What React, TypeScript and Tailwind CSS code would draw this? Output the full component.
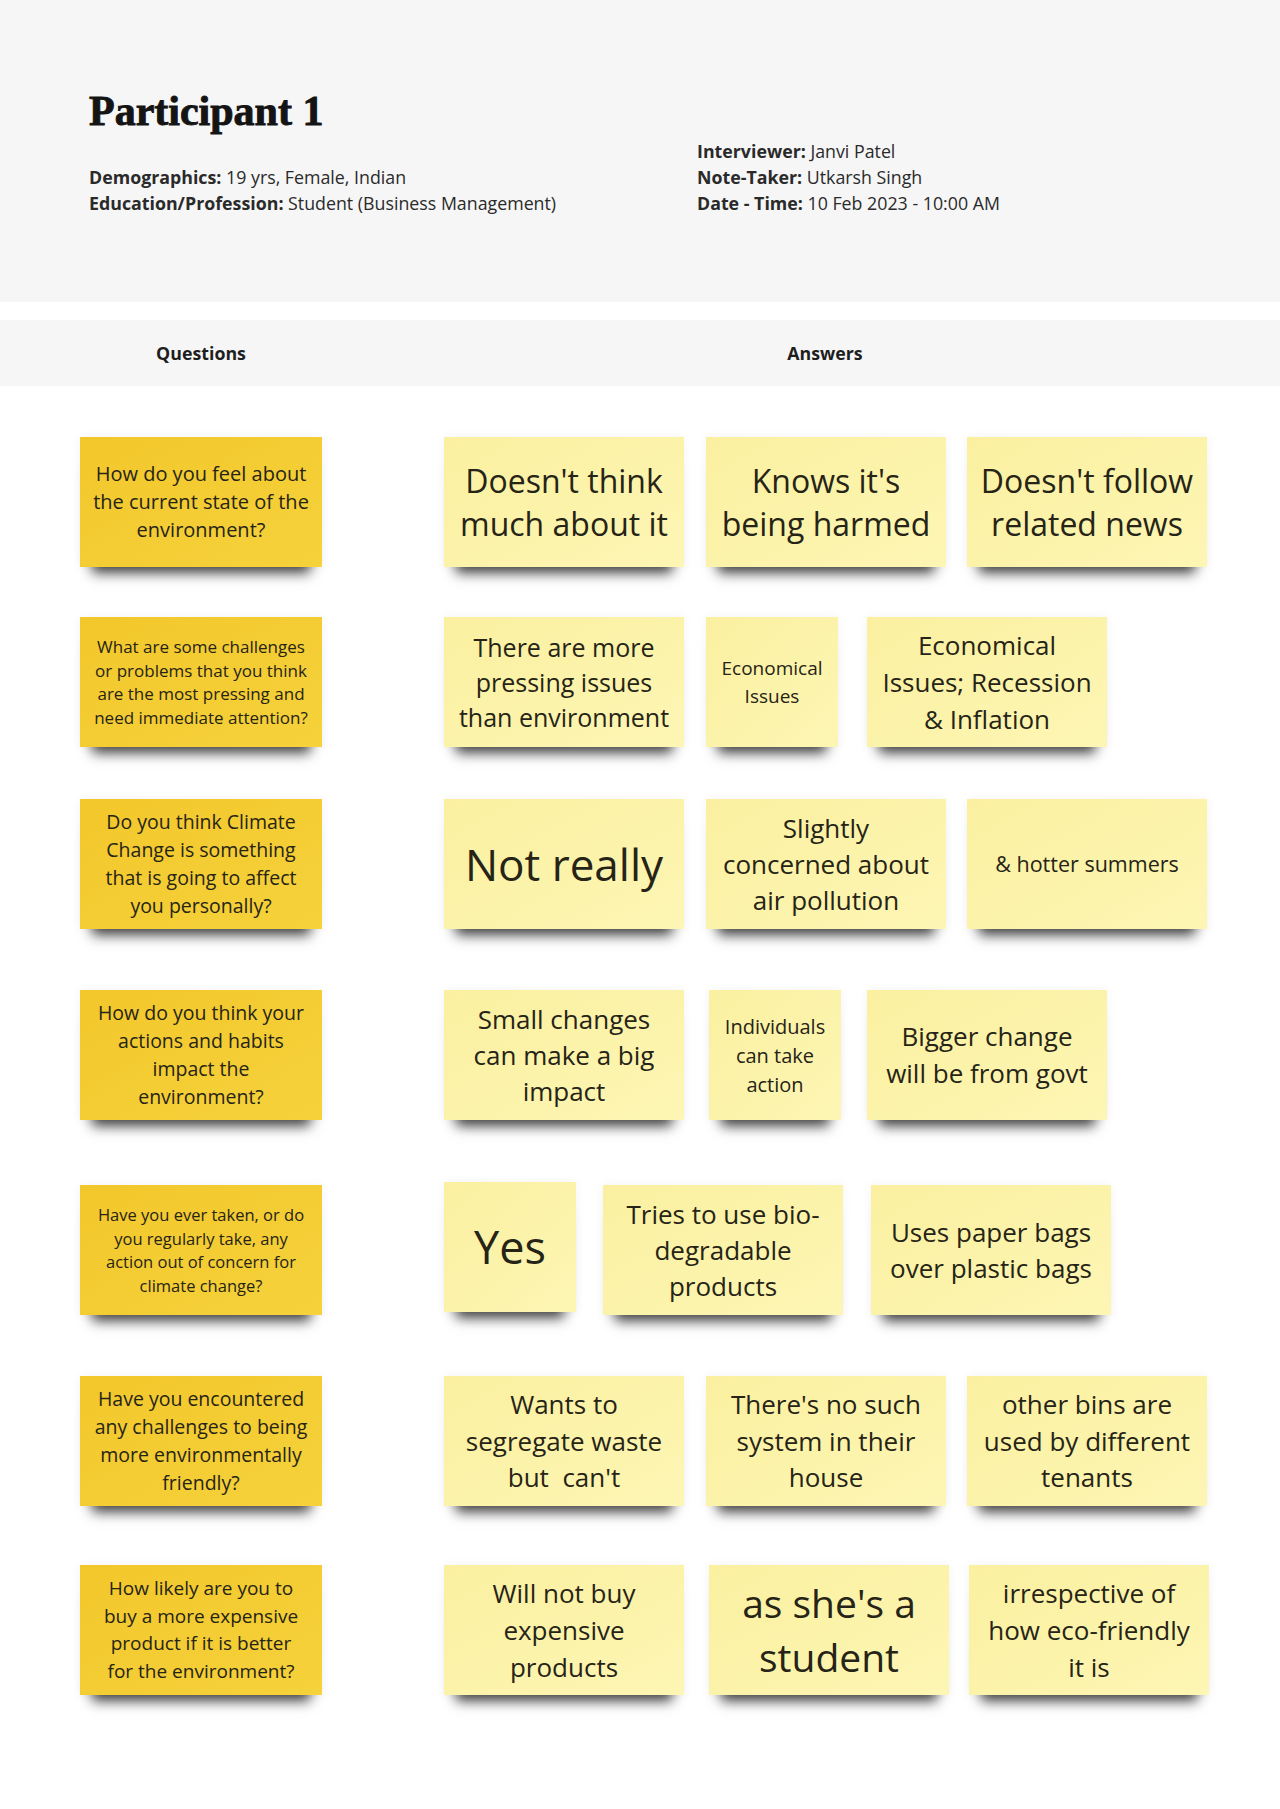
import type { ReactNode } from "react";

type NoteProps = {
  kind: "question" | "answer";
  className?: string;
  children: ReactNode;
};

// sticky note with the curled shadow underneath
function Note({ kind, className = "", children }: NoteProps) {
  const tone =
    kind === "question"
      ? "bg-gradient-to-br from-[#f2c72b] to-[#f6d23b] w-[242px]"
      : "bg-gradient-to-br from-[#fbf0a0] to-[#fdf6b4]";
  return (
    <div
      className={`flex h-[130px] shrink-0 items-center justify-center text-center text-[#262416] shadow-[0_18px_12px_-12px_rgba(0,0,0,0.75),0_0_10px_rgba(0,0,0,0.05)] ${tone} ${className}`}
    >
      <p>{children}</p>
    </div>
  );
}

function Row({
  className = "",
  question,
  children,
}: {
  className?: string;
  question: ReactNode;
  children: ReactNode;
}) {
  return (
    <div className={`flex items-start ${className}`}>
      {question}
      <div className="ml-[122px] flex items-start">{children}</div>
    </div>
  );
}

export default function App() {
  return (
    <div className="min-h-[1809px] bg-white font-['Open_Sans',sans-serif] text-[#222]">
      <header className="h-[302px] bg-[#f6f6f6] px-[89px] pt-[86px]">
        <h1 className="font-['Liberation_Serif',serif] text-[42px] font-black leading-[50px] text-[#141414] [-webkit-text-stroke:0.9px_#141414]">
          Participant 1
        </h1>
        <div className="mt-[2px] grid grid-cols-[608px_1fr] items-end text-[17.8px] leading-[26px] text-[#2a2a2a]">
          <div>
            <div>
              <span className="font-bold">Demographics:</span> 19 yrs, Female, Indian
            </div>
            <div>
              <span className="font-bold">Education/Profession:</span> Student (Business Management)
            </div>
          </div>
          <div>
            <div>
              <span className="font-bold">Interviewer:</span> Janvi Patel
            </div>
            <div>
              <span className="font-bold">Note-Taker:</span> Utkarsh Singh
            </div>
            <div>
              <span className="font-bold">Date - Time:</span> 10 Feb 2023 - 10:00 AM
            </div>
          </div>
        </div>
      </header>

      <div className="mt-[18px] flex h-[66px] items-center bg-[#f6f6f6] pl-[80px] text-[17.8px] font-bold text-[#1e1e1e]">
        <div className="w-[242px] text-center">Questions</div>
        <div className="ml-[122px] w-[762px] text-center">Answers</div>
      </div>

      <main className="flex flex-col pb-[113px] pl-[80px]">
        <Row
          className="mt-[51px]"
          question={
            <Note kind="question" className="text-[20px] leading-[28px]">
              How do you feel about
              <br />
              the current state of the
              <br />
              environment?
            </Note>
          }
        >
          <Note kind="answer" className="w-[240px] text-[32px] leading-[43px]">
            Doesn't think
            <br />
            much about it
          </Note>
          <Note kind="answer" className="ml-[22px] w-[240px] text-[32px] leading-[43px]">
            Knows it's
            <br />
            being harmed
          </Note>
          <Note kind="answer" className="ml-[21px] w-[240px] text-[32px] leading-[43px]">
            Doesn't follow
            <br />
            related news
          </Note>
        </Row>

        <Row
          className="mt-[50px]"
          question={
            <Note kind="question" className="text-[17px] leading-[23.5px]">
              What are some challenges
              <br />
              or problems that you think
              <br />
              are the most pressing and
              <br />
              need immediate attention?
            </Note>
          }
        >
          <Note kind="answer" className="w-[240px] text-[25px] leading-[35px]">
            There are more
            <br />
            pressing issues
            <br />
            than environment
          </Note>
          <Note kind="answer" className="ml-[22px] w-[132px] text-[19px] leading-[28px]">
            Economical
            <br />
            Issues
          </Note>
          <Note kind="answer" className="ml-[29px] w-[240px] text-[26px] leading-[37px]">
            Economical
            <br />
            Issues; Recession
            <br />
            &amp; Inflation
          </Note>
        </Row>

        <Row
          className="mt-[52px]"
          question={
            <Note kind="question" className="text-[19.5px] leading-[28px]">
              Do you think Climate
              <br />
              Change is something
              <br />
              that is going to affect
              <br />
              you personally?
            </Note>
          }
        >
          <Note kind="answer" className="w-[240px] text-[44px] leading-[56px]">
            Not really
          </Note>
          <Note kind="answer" className="ml-[22px] w-[240px] text-[26px] leading-[36px]">
            Slightly
            <br />
            concerned about
            <br />
            air pollution
          </Note>
          <Note kind="answer" className="ml-[21px] w-[240px] text-[21.5px] leading-[30px]">
            &amp; hotter summers
          </Note>
        </Row>

        <Row
          className="mt-[61px]"
          question={
            <Note kind="question" className="text-[19.5px] leading-[28px]">
              How do you think your
              <br />
              actions and habits
              <br />
              impact the
              <br />
              environment?
            </Note>
          }
        >
          <Note kind="answer" className="w-[240px] text-[26px] leading-[36px]">
            Small changes
            <br />
            can make a big
            <br />
            impact
          </Note>
          <Note kind="answer" className="ml-[25px] w-[132px] text-[20px] leading-[29px]">
            Individuals
            <br />
            can take
            <br />
            action
          </Note>
          <Note kind="answer" className="ml-[26px] w-[240px] text-[26px] leading-[37px]">
            Bigger change
            <br />
            will be from govt
          </Note>
        </Row>

        <Row
          className="mt-[65px]"
          question={
            <Note kind="question" className="text-[16.5px] leading-[23.5px]">
              Have you ever taken, or do
              <br />
              you regularly take, any
              <br />
              action out of concern for
              <br />
              climate change?
            </Note>
          }
        >
          <Note kind="answer" className="-mt-[3px] w-[132px] text-[45px] leading-[56px]">
            Yes
          </Note>
          <Note kind="answer" className="ml-[27px] w-[240px] text-[26px] leading-[36px]">
            Tries to use bio-
            <br />
            degradable
            <br />
            products
          </Note>
          <Note kind="answer" className="ml-[28px] w-[240px] text-[26px] leading-[36px]">
            Uses paper bags
            <br />
            over plastic bags
          </Note>
        </Row>

        <Row
          className="mt-[61px]"
          question={
            <Note kind="question" className="text-[19.5px] leading-[28px]">
              Have you encountered
              <br />
              any challenges to being
              <br />
              more environmentally
              <br />
              friendly?
            </Note>
          }
        >
          <Note kind="answer" className="w-[240px] text-[26px] leading-[36.5px]">
            Wants to
            <br />
            segregate waste
            <br />
            but&nbsp; can't
          </Note>
          <Note kind="answer" className="ml-[22px] w-[240px] text-[26px] leading-[36.5px]">
            There's no such
            <br />
            system in their
            <br />
            house
          </Note>
          <Note kind="answer" className="ml-[21px] w-[240px] text-[26px] leading-[36.5px]">
            other bins are
            <br />
            used by different
            <br />
            tenants
          </Note>
        </Row>

        <Row
          className="mt-[59px]"
          question={
            <Note kind="question" className="text-[19px] leading-[27.5px]">
              How likely are you to
              <br />
              buy a more expensive
              <br />
              product if it is better
              <br />
              for the environment?
            </Note>
          }
        >
          <Note kind="answer" className="w-[240px] text-[26px] leading-[37px]">
            Will not buy
            <br />
            expensive
            <br />
            products
          </Note>
          <Note kind="answer" className="ml-[25px] w-[240px] text-[39px] leading-[54px]">
            as she's a
            <br />
            student
          </Note>
          <Note kind="answer" className="ml-[20px] w-[240px] text-[26px] leading-[37px]">
            irrespective of
            <br />
            how eco-friendly
            <br />
            it is
          </Note>
        </Row>
      </main>
    </div>
  );
}
